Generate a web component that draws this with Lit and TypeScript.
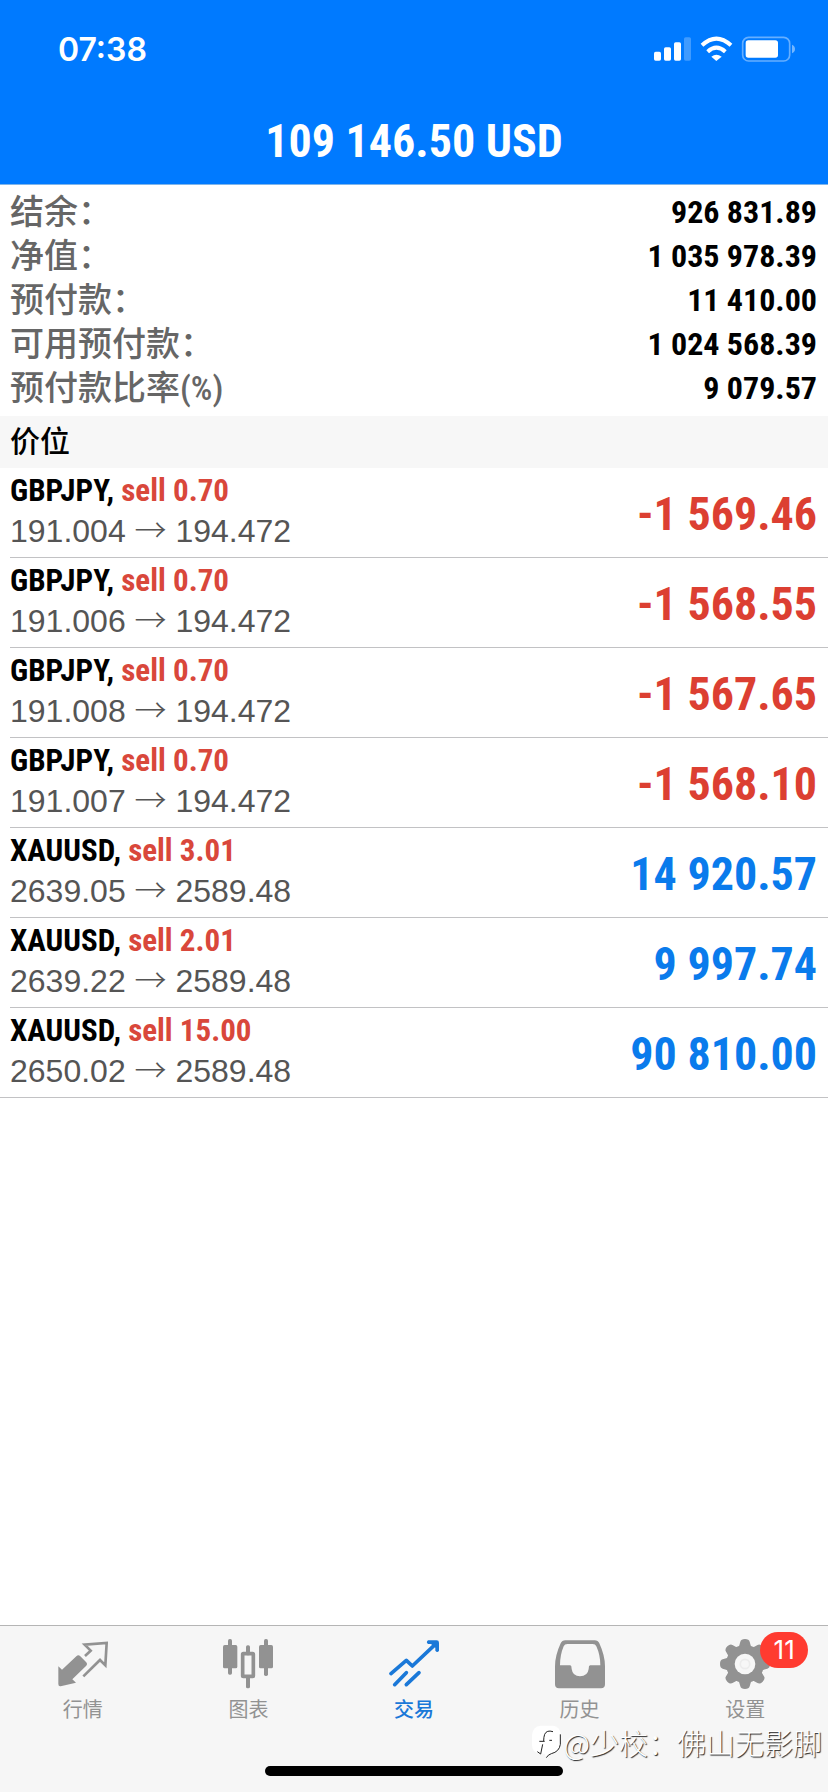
import { LitElement, html, svg, css } from "lit";
import { customElement, property, state } from "lit/decorators.js";
import { classMap } from "lit/directives/class-map.js";

interface Position {
  symbol: string;
  side: string;
  volume: string;
  open: string;
  current: string;
  profit: string;
}

const SUMMARY: [string, string][] = [
  ["结余：", "926 831.89"],
  ["净值：", "1 035 978.39"],
  ["预付款：", "11 410.00"],
  ["可用预付款：", "1 024 568.39"],
  ["预付款比率(%)", "9 079.57"],
];

const POSITIONS: Position[] = [
  { symbol: "GBPJPY", side: "sell", volume: "0.70", open: "191.004", current: "194.472", profit: "-1 569.46" },
  { symbol: "GBPJPY", side: "sell", volume: "0.70", open: "191.006", current: "194.472", profit: "-1 568.55" },
  { symbol: "GBPJPY", side: "sell", volume: "0.70", open: "191.008", current: "194.472", profit: "-1 567.65" },
  { symbol: "GBPJPY", side: "sell", volume: "0.70", open: "191.007", current: "194.472", profit: "-1 568.10" },
  { symbol: "XAUUSD", side: "sell", volume: "3.01", open: "2639.05", current: "2589.48", profit: "14 920.57" },
  { symbol: "XAUUSD", side: "sell", volume: "2.01", open: "2639.22", current: "2589.48", profit: "9 997.74" },
  { symbol: "XAUUSD", side: "sell", volume: "15.00", open: "2650.02", current: "2589.48", profit: "90 810.00" },
];

const quotesIcon = svg`
  <path d="M171 168 L182 178 L225 138 Q231 132 237 138 L254 155 Q260 161 254 167 L213 207 L224 217 L178 228 Q171 229 171 221 Z" fill="currentColor"/>
  <path d="M246 198 L296 149 L312 165 L316 98 L250 103 L268 121 L251 137" fill="none" stroke="currentColor" stroke-width="8"/>`;

const chartsIcon = svg`
  <g fill="currentColor">
    <rect x="684" y="86" width="12" height="107" rx="5"/><rect x="669" y="104" width="43" height="70" rx="5"/>
    <rect x="792" y="86" width="12" height="111" rx="5"/><rect x="777" y="104" width="42" height="70" rx="5"/>
    <rect x="738" y="105" width="12" height="30" rx="5"/><rect x="738" y="198" width="12" height="36" rx="5"/>
  </g>
  <rect x="728" y="130" width="32" height="68" rx="2" fill="none" stroke="currentColor" stroke-width="11"/>`;

const tradeIcon = svg`
  <g fill="none" stroke="currentColor" stroke-width="11" stroke-linecap="round" stroke-linejoin="round">
    <path d="M360 190 L406 150 L424 167 L492 103"/>
    <path d="M371 223 L406 187"/><path d="M406 223 L444 187"/>
  </g>
  <path d="M471 90 H497 Q504 90 504 97 V121 Q499 129 493 121 V112 L480 101 H471 Q464 96 471 90 Z" fill="currentColor"/>`;

const historyIcon = svg`
  <path fill-rule="evenodd" fill="currentColor" d="M160 90 H248 Q258 90 262 99 Q279 136 279 168 V222 Q279 234 267 234 H141 Q129 234 129 222 V168 Q129 136 146 99 Q150 90 160 90 Z M166 101 Q158 101 155 108 Q144 134 144 165 H175 Q179 166 179 176 Q182 198 204 198 Q227 198 230 176 Q230 166 234 165 H265 Q265 134 253 108 Q250 101 242 101 Z"/>`;

const settingsIcon = svg`
  <g fill="currentColor">
    ${[0, 45, 90, 135].map(
      (a) => svg`<path transform="rotate(${a} 702 161)" d="M678 116 Q686 108 688 94 Q690 86 702 86 Q714 86 716 94 Q718 108 726 116 V206 Q718 214 716 228 Q714 236 702 236 Q690 236 688 228 Q686 214 678 206 Z"/>`,
    )}
    <circle cx="702" cy="161" r="57"/>
  </g>
  <circle cx="702" cy="161" r="31" fill="#f7f7f7"/>
  <circle cx="702" cy="161" r="14" fill="none" stroke="#ececec" stroke-width="5"/>`;

const TABS = [
  { id: "quotes", label: "行情", box: "170 86 150 150", icon: quotesIcon, badge: "" },
  { id: "charts", label: "图表", box: "669 86 150 150", icon: chartsIcon, badge: "" },
  { id: "trade", label: "交易", box: "354 86 150 150", icon: tradeIcon, badge: "" },
  { id: "history", label: "历史", box: "129 86 150 150", icon: historyIcon, badge: "" },
  { id: "settings", label: "设置", box: "627 86 150 150", icon: settingsIcon, badge: "11" },
];

@customElement("status-bar")
export class StatusBar extends LitElement {
  static styles = css`
    :host {
      display: flex;
      align-items: center;
      justify-content: space-between;
      height: 98px;
      padding: 0 32px 0 58px;
      color: #fff;
    }
    .time {
      padding-top: 2px;
      font: 600 32px/40px Inter, sans-serif;
    }
    .icons {
      display: block;
      width: 142px;
      height: 28px;
    }
  `;
  render() {
    return html`
      <span class="time">07:38</span>
      <svg class="icons" viewBox="717 106 426 84" aria-hidden="true">
        <g fill="#fff">
          <rect x="717" y="156" width="21" height="27" rx="5" />
          <rect x="747" y="143" width="21" height="40" rx="5" />
          <rect x="777" y="128" width="21" height="55" rx="5" />
          <rect x="807" y="113" width="21" height="70" rx="5" opacity=".25" />
          <path d="M889 171 Q904 159 920 171 L904 184 Z" />
          <rect x="992" y="122" width="97" height="52" rx="8" />
          <path d="M1131 135 Q1140 139 1140 148 Q1140 157 1131 161 Z" opacity=".45" />
        </g>
        <g fill="none" stroke="#fff" stroke-width="12">
          <path d="M861 137 Q904 97 948 137" />
          <path d="M878 156 Q904 132 931 156" />
        </g>
        <rect x="983" y="113" width="141" height="71" rx="18" fill="none" stroke="#fff" stroke-width="5" opacity=".4" />
      </svg>
    `;
  }
}

@customElement("position-row")
export class PositionRow extends LitElement {
  @property({ attribute: false }) position!: Position;
  static styles = css`
    :host {
      display: flex;
      justify-content: space-between;
      height: 86px;
      padding: 3px 11px 0 0;
    }
    .name {
      font: 700 31px/40px "Roboto Condensed", "Liberation Sans Narrow", sans-serif;
      color: #000;
    }
    .side {
      color: #d9473b;
    }
    .prices {
      font: 400 32px/40px "Liberation Sans", sans-serif;
      color: #555;
    }
    .arrow {
      font-family: "Noto Sans CJK SC", sans-serif;
      font-weight: 300;
      line-height: 1;
    }
    .profit {
      font: 700 46px/86px "Roboto Condensed", "Liberation Sans Narrow", sans-serif;
      color: #0a7bec;
    }
    .loss {
      color: #dc3f32;
    }
  `;
  render() {
    const p = this.position;
    return html`
      <div>
        <div class="name">${p.symbol}, <span class="side">${p.side} ${p.volume}</span></div>
        <div class="prices">${p.open} <span class="arrow">→</span> ${p.current}</div>
      </div>
      <div class=${classMap({ profit: true, loss: p.profit.startsWith("-") })}>${p.profit}</div>
    `;
  }
}

@customElement("app-root")
export class AppRoot extends LitElement {
  @state() private active = "trade";

  static styles = css`
    :host {
      display: flex;
      flex-direction: column;
      min-height: 100vh;
      background: #fff;
      font-family: "Roboto Condensed", "Liberation Sans Narrow", "Noto Sans CJK SC", sans-serif;
    }
    header {
      background: #007aff;
      border-bottom: 1px solid #7fb5ea;
    }
    h1 {
      margin: 0;
      font-size: 46px;
      line-height: 86px;
      text-align: center;
      color: #fff;
    }
    main {
      flex: 1;
    }
    .summary {
      margin: 0;
      padding: 5px 11px 6px 10px;
    }
    .line {
      display: flex;
      justify-content: space-between;
      line-height: 44px;
    }
    dt {
      font-size: 34px;
      font-weight: 500;
      color: #666;
    }
    dd {
      margin: 0;
      font-size: 32px;
      font-weight: 700;
      color: #000;
    }
    h2 {
      margin: 0;
      padding: 0 10px;
      background: #f7f7f7;
      font-size: 30px;
      font-weight: 500;
      line-height: 52px;
    }
    .positions {
      margin: 0;
      padding: 0;
      list-style: none;
      border-bottom: 1px solid #c2c2c4;
    }
    .item {
      margin-left: 10px;
    }
    .item + .item {
      border-top: 1px solid #c2c2c4;
    }
    footer {
      position: relative;
      background: #f6f6f6;
      border-top: 1px solid #b5b5b5;
    }
    nav {
      display: grid;
      grid-template-columns: repeat(5, 1fr);
    }
    .tab {
      display: flex;
      flex-direction: column;
      align-items: center;
      gap: 6px;
      padding: 13px 0 0;
      border: 0;
      background: none;
      color: #929292;
      font: 400 20px/28px "Noto Sans CJK SC", sans-serif;
    }
    .active {
      color: #1a78d8;
      font-weight: 500;
    }
    .glyph {
      position: relative;
      width: 50px;
      height: 50px;
    }
    .glyph svg {
      display: block;
      width: 100%;
      height: 100%;
    }
    .badge {
      position: absolute;
      left: 40px;
      top: -7px;
      width: 48px;
      border-radius: 18px;
      background: #ff3b30;
      color: #fff;
      font: 400 26px/36px Inter, sans-serif;
      text-align: center;
    }
    .home {
      width: 36%;
      height: 10px;
      margin: 43px auto 16px;
      border-radius: 5px;
      background: #000;
    }
    .watermark {
      position: absolute;
      right: 6px;
      top: 96px;
      display: flex;
      align-items: center;
      gap: 2px;
      color: #fff;
      font: 300 29px/40px "Noto Sans CJK SC", sans-serif;
      text-shadow: 1px 1px 1px #222;
    }
    .mark {
      width: 30px;
      height: 34px;
    }
  `;

  render() {
    return html`
      <header>
        <status-bar></status-bar>
        <h1>109 146.50 USD</h1>
      </header>
      <main>
        <dl class="summary">
          ${SUMMARY.map(([k, v]) => html`<div class="line"><dt>${k}</dt><dd>${v}</dd></div>`)}
        </dl>
        <h2>价位</h2>
        <ul class="positions">
          ${POSITIONS.map((p) => html`<li class="item"><position-row .position=${p}></position-row></li>`)}
        </ul>
      </main>
      <footer>
        <nav>
          ${TABS.map(
            (t) => html`
              <button
                type="button"
                class=${classMap({ tab: true, active: t.id === this.active })}
                @click=${() => (this.active = t.id)}
              >
                <span class="glyph">
                  <svg viewBox=${t.box} aria-hidden="true">${t.icon}</svg>
                  ${t.badge ? html`<span class="badge">${t.badge}</span>` : ""}
                </span>
                <span>${t.label}</span>
              </button>
            `,
          )}
        </nav>
        <div class="home"></div>
        <div class="watermark">
          <svg class="mark" viewBox="774 352 90 102" aria-hidden="true">
            <path d="M800 354 H838 Q860 358 860 382 V410 Q856 432 832 438 Q822 441 817 450 L812 438 H796 Q774 434 774 412 V382 Q776 356 800 354 Z" fill="#fff" />
            <path d="M837 372 Q818 366 812 380 Q809 388 809 400 M796 401 H812 M806 410 L800 439 L790 432 M826 398 H834 M859 380 V410 Q856 432 832 438 Q822 441 817 450" fill="none" stroke="#222" stroke-width="3" />
          </svg>
          <span>@少校：佛山无影脚</span>
        </div>
      </footer>
    `;
  }
}
